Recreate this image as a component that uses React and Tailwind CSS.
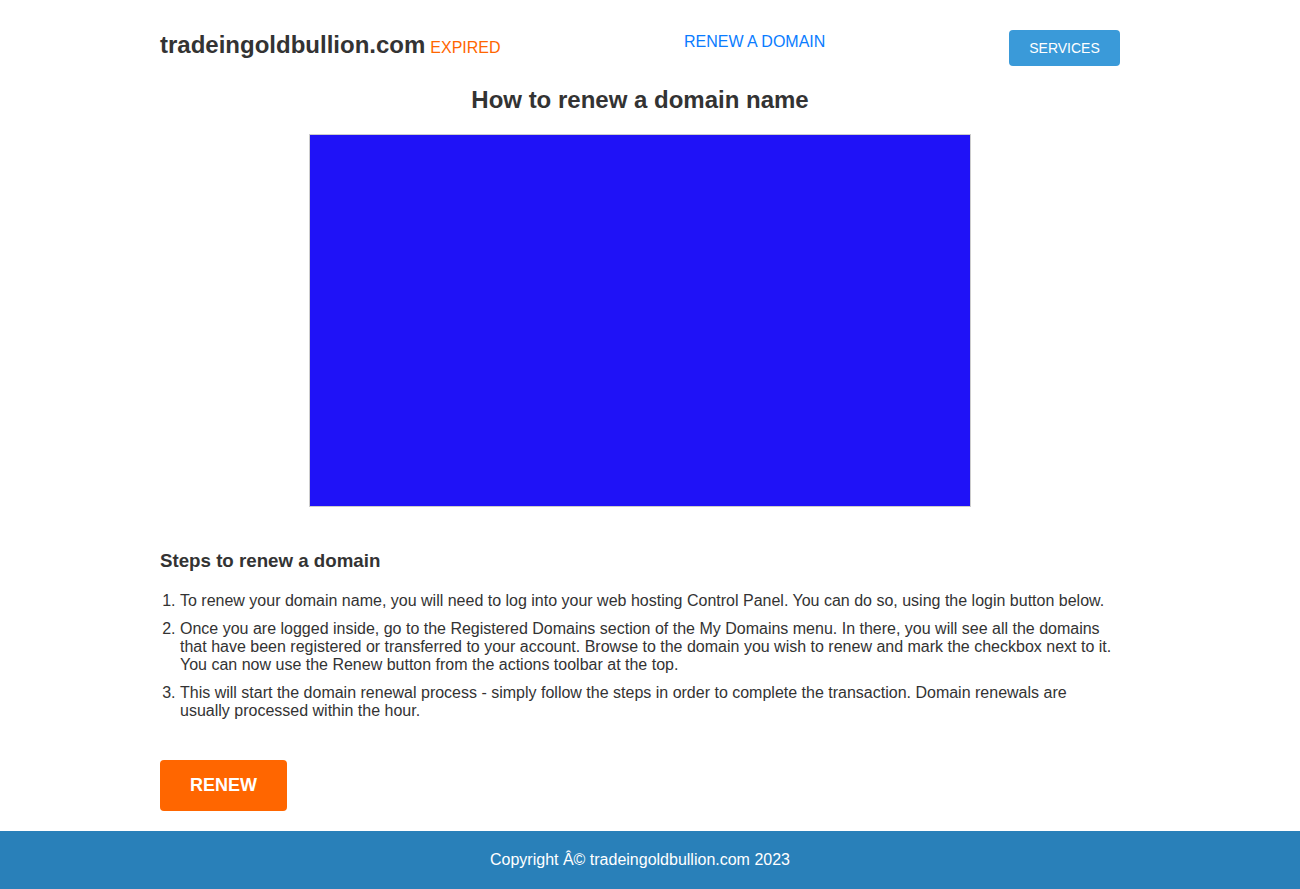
export default function App() {
  const steps = [
    'To renew your domain name, you will need to log into your web hosting Control Panel. You can do so, using the login button below.',
    'Once you are logged inside, go to the Registered Domains section of the My Domains menu. In there, you will see all the domains that have been registered or transferred to your account. Browse to the domain you wish to renew and mark the checkbox next to it. You can now use the Renew button from the actions toolbar at the top.',
    'This will start the domain renewal process - simply follow the steps in order to complete the transaction. Domain renewals are usually processed within the hour.',
  ];

  return (
    <div className="min-h-screen bg-white text-[#333] font-['Liberation_Sans',Arial,sans-serif]">
      <div className="w-[960px] ml-[160px]">
        <header className="flex items-start pt-[30px]">
          <div className="w-[524px] flex items-baseline mt-[1px]">
            <span className="text-[24px] leading-[28px] font-bold text-[#333]">tradeingoldbullion.com</span>
            <span className="ml-[5px] text-[16px] text-[#ff6600]">EXPIRED</span>
          </div>
          <a href="#" className="mt-[2px] text-[16px] leading-[20px] text-[#0a7cff]">RENEW A DOMAIN</a>
          <button className="ml-auto w-[111px] h-[36px] rounded-[4px] bg-[#3a9ad9] text-white text-[14px]">SERVICES</button>
        </header>

        <h1 className="mt-[20px] text-center text-[24px] leading-[28px] font-bold">How to renew a domain name</h1>

        <div className="mt-[20px] mx-auto w-[662px] h-[373px] border border-[#ccc] bg-[#1f12f7]" />

        <h2 className="mt-[43px] text-[18.72px] leading-[22px] font-bold">Steps to renew a domain</h2>

        <ol className="mt-[20px] pl-[20px] list-decimal text-[16px] leading-[18px]">
          {steps.map((s, i) => (
            <li key={i} className="mb-[10px]">{s}</li>
          ))}
        </ol>

        <button className="mt-[30px] mb-[20px] w-[127px] h-[51px] rounded-[4px] bg-[#ff6600] text-white text-[18px] font-bold">RENEW</button>
      </div>

      <footer className="h-[58px] pr-[20px] flex items-center justify-center bg-[#2980b9] text-white text-[16px]">
        Copyright Â© tradeingoldbullion.com 2023
      </footer>
    </div>
  );
}
